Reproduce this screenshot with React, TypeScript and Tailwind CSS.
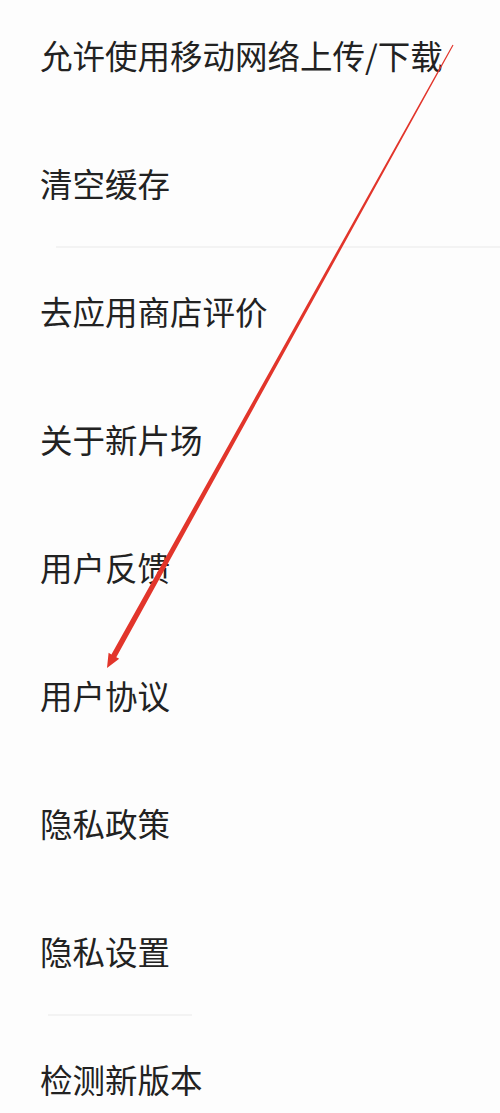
const items = [
  { label: "允许使用移动网络上传/下载" },
  { label: "清空缓存", divider: "long" },
  { label: "去应用商店评价" },
  { label: "关于新片场" },
  { label: "用户反馈" },
  { label: "用户协议" },
  { label: "隐私政策" },
  { label: "隐私设置", divider: "short" },
  { label: "检测新版本" },
];

function Arrow() {
  return (
    <svg
      className="absolute left-0 top-0 pointer-events-none"
      width="500"
      height="1113"
      viewBox="0 0 500 1113"
    >
      <polygon
        points="453.5,45.3 116.3,657.2 119.2,658.8 107,668 108.6,652.8 111.4,654.4 452.5,44.7"
        fill="#e2352b"
      />
    </svg>
  );
}

export default function App() {
  return (
    <div className="relative w-[500px] h-[1113px] overflow-hidden bg-[#fdfdfd]">
      <div className="-mt-[9px] flex flex-col">
        {items.map((item) => (
          <div key={item.label} className="flex flex-col">
            <div className="h-[128px] flex items-center pl-10">
              <span
                className="text-[32.5px] leading-[32px] text-[#222222]"
                style={{ fontFamily: '"Noto Sans CJK SC", "Noto Sans", sans-serif' }}
              >
                {item.label}
              </span>
            </div>
            {item.divider === "long" && (
              <div className="h-[2px] -my-px ml-[56px] bg-[#f3f3f3]" />
            )}
            {item.divider === "short" && (
              <div className="h-[2px] -my-px ml-[48px] w-[144px] bg-[#f3f3f3]" />
            )}
          </div>
        ))}
      </div>
      <Arrow />
    </div>
  );
}
